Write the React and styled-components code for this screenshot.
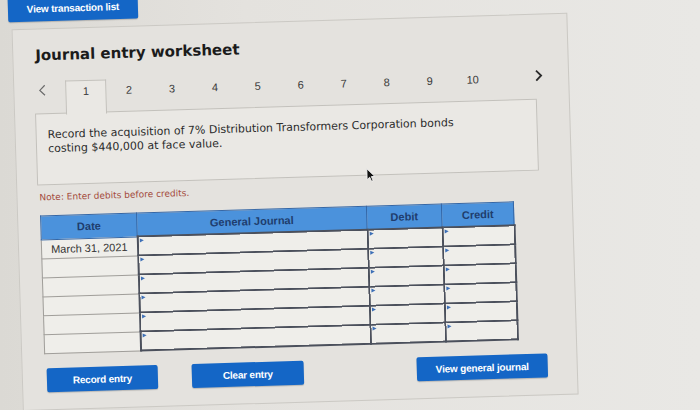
import React from 'react';
import styled, { createGlobalStyle } from 'styled-components';

const GlobalStyle = createGlobalStyle`
  body {
    margin: 0;
    font-family: "DejaVu Sans", Verdana, sans-serif;
  }
`;

const Stage = styled.div`
  width: 700px;
  height: 410px;
  overflow: hidden;
  background: linear-gradient(90deg, #dbd9d4 0%, #e4e2de 35%, #e9e8e5 100%);
`;

// the photo is taken at a slight angle, so the whole sheet is tilted
const Sheet = styled.div`
  width: 700px;
  height: 410px;
  display: flex;
  flex-direction: column;
  align-items: flex-start;
  transform: rotate(-1.7deg);
  transform-origin: 290px 210px;
`;

const BlueButton = styled.button`
  width: ${(p) => p.$w}px;
  height: 24px;
  padding: 0;
  border: none;
  border-radius: 2px;
  background: #1466c6;
  color: #fff;
  font-family: "Liberation Sans", Arial, sans-serif;
  font-weight: bold;
  font-size: 10px;
  letter-spacing: -0.2px;
  box-shadow: 0 1px 1px rgba(0, 0, 0, 0.18);
`;

const ListButton = styled(BlueButton)`
  height: 26px;
  margin: -12px 0 0 14px;
`;

const Panel = styled.section`
  position: relative;
  box-sizing: border-box;
  width: 556px;
  margin: 7px 0 0 17px;
  padding: 16px 22px 17px;
  border: 1px solid #cbc9c4;
  background: #e4e2de;
`;

const Title = styled.h2`
  margin: 0;
  font-size: 15px;
  line-height: 20px;
  font-weight: bold;
  color: #1b1b1b;
`;

const TabNav = styled.nav`
  display: flex;
  align-items: flex-start;
  height: 33px;
  margin-top: 16px;
`;

const Arrow = styled.span`
  display: flex;
  width: ${(p) => p.$w}px;
  padding: 3px 0 0 ${(p) => p.$pad || 0}px;
  margin-left: ${(p) => (p.$right ? 'auto' : '0')};
`;

const Tabs = styled.div`
  display: flex;
  gap: 2px;
`;

const Tab = styled.span`
  position: relative;
  z-index: 1;
  box-sizing: border-box;
  width: 41px;
  height: 34px;
  padding-top: 3px;
  text-align: center;
  font-family: "Liberation Sans", Arial, sans-serif;
  font-size: 11px;
  line-height: 14px;
  color: #3a3a3a;
  border: 1px solid ${(p) => (p.$active ? '#c3c1bc' : 'transparent')};
  border-bottom: none;
  background: ${(p) => (p.$active ? '#eae8e4' : 'transparent')};
`;

const ContentBox = styled.div`
  box-sizing: border-box;
  width: 502px;
  height: 72px;
  margin: -1px 0 0 -2px;
  padding: 14px 11px;
  border: 1px solid #c3c1bc;
  background: #eae8e4;
`;

const Prompt = styled.p`
  margin: 0;
  max-width: 420px;
  font-size: 11px;
  line-height: 14px;
  color: #2b2b2b;
`;

const Note = styled.p`
  margin: 6px 0 0;
  font-size: 9px;
  line-height: 12px;
  color: #a34a3c;
`;

const Journal = styled.table`
  width: 469px;
  margin-top: 12px;
  border-collapse: collapse;
  table-layout: fixed;
`;

const HeadCell = styled.th`
  width: ${(p) => p.$w}px;
  height: 22px;
  padding: 0;
  background: #4b92dc;
  border: 1px solid #3567a6;
  color: #1f3d6d;
  font-family: "Liberation Sans", Arial, sans-serif;
  font-size: 11px;
  font-weight: bold;
`;

const DateCell = styled.td`
  height: 18px;
  padding: 0;
  background: #efeeea;
  border: 1px solid #a09e9a;
  text-align: center;
  font-family: "Liberation Sans", Arial, sans-serif;
  font-size: 11px;
  color: #333;
`;

const InputCell = styled.td`
  position: relative;
  height: 17px;
  padding: 0;
  background: #efeeea;
  border: 2px solid #4b505c;

  &::before {
    content: '';
    position: absolute;
    top: 1px;
    left: 1px;
    border-top: 2.5px solid transparent;
    border-bottom: 2.5px solid transparent;
    border-left: 4px solid #3d6fb6;
  }
`;

const Actions = styled.div`
  display: flex;
  gap: 34px;
  margin-top: 14px;
  padding: 0 7px 0 2px;
`;

const PushRight = styled.div`
  margin-left: auto;
`;

const Pointer = styled.svg`
  position: absolute;
  left: 349px;
  top: 148px;
`;

const rows = ['March 31, 2021', '', '', '', '', ''];

function App() {
  return (
    <Stage>
      <GlobalStyle />
      <Sheet>
        <ListButton $w={130}>View transaction list</ListButton>
        <Panel>
          <Title>Journal entry worksheet</Title>
          <TabNav>
            <Arrow $w={27} $pad={2}>
              <svg width="8" height="12" viewBox="0 0 8 12">
                <polyline points="6.5,1 1.5,6 6.5,11" fill="none" stroke="#6a6a6a" strokeWidth="1.2" />
              </svg>
            </Arrow>
            <Tabs>
              {[1, 2, 3, 4, 5, 6, 7, 8, 9, 10].map((n) => (
                <Tab key={n} $active={n === 1}>{n}</Tab>
              ))}
            </Tabs>
            <Arrow $w={12} $right>
              <svg width="9" height="12" viewBox="0 0 9 12">
                <polyline points="2,1 7,6 2,11" fill="none" stroke="#2b2b2b" strokeWidth="1.8" />
              </svg>
            </Arrow>
          </TabNav>
          <ContentBox>
            <Prompt>
              Record the acquisition of 7% Distribution Transformers Corporation bonds costing $440,000 at face value.
            </Prompt>
          </ContentBox>
          <Note>Note: Enter debits before credits.</Note>
          <Journal>
            <thead>
              <tr>
                <HeadCell $w={95}>Date</HeadCell>
                <HeadCell $w={229}>General Journal</HeadCell>
                <HeadCell $w={74}>Debit</HeadCell>
                <HeadCell $w={71}>Credit</HeadCell>
              </tr>
            </thead>
            <tbody>
              {rows.map((d, i) => (
                <tr key={i}>
                  <DateCell>{d}</DateCell>
                  <InputCell />
                  <InputCell />
                  <InputCell />
                </tr>
              ))}
            </tbody>
          </Journal>
          <Actions>
            <BlueButton $w={111}>Record entry</BlueButton>
            <BlueButton $w={112}>Clear entry</BlueButton>
            <PushRight>
              <BlueButton $w={131}>View general journal</BlueButton>
            </PushRight>
          </Actions>
          <Pointer width="10" height="15" viewBox="0 0 10 15">
            <path d="M1 1 L1 12 L3.6 9.6 L5.4 13.8 L7 13.1 L5.3 9 L8.8 9 Z" fill="#111" stroke="#f4f4f4" strokeWidth="0.9" />
          </Pointer>
        </Panel>
      </Sheet>
    </Stage>
  );
}

export default App;
